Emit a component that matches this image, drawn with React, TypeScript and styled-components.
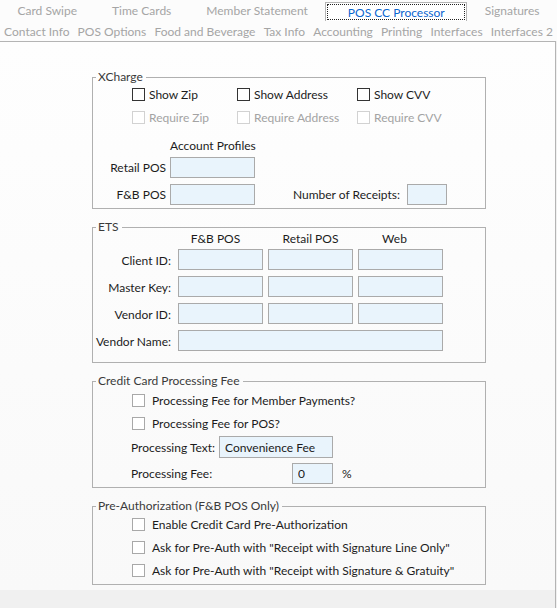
import styled, { createGlobalStyle } from "styled-components";

const GlobalStyle = createGlobalStyle`
  body {
    margin: 0;
    background: #f0f0f0;
    font-family: Lato, "Noto Sans", sans-serif;
    font-size: 12px;
    color: #1c1c1c;
  }
`;

const topTabs = ["Card Swipe", "Time Cards", "Member Statement", "POS CC Processor", "Signatures"];
const bottomTabs = [
  "Contact Info",
  "POS Options",
  "Food and Beverage",
  "Tax Info",
  "Accounting",
  "Printing",
  "Interfaces",
  "Interfaces 2",
];
const etsRows = ["Client ID:", "Master Key:", "Vendor ID:"];

function CheckItem({
  label,
  tone = "dark",
  disabled = false,
  gap = 4,
  width,
}: {
  label: string;
  tone?: "dark" | "light" | "faint";
  disabled?: boolean;
  gap?: number;
  width?: number;
}) {
  return (
    <CheckWrap $gap={gap} $width={width}>
      <Box $tone={tone} />
      <CheckText $disabled={disabled}>{label}</CheckText>
    </CheckWrap>
  );
}

function App() {
  return (
    <Page>
      <GlobalStyle />
      <TabStrip>
        <TabRow $height={21}>
          {topTabs.map((t) =>
            t === "POS CC Processor" ? (
              <ActiveTab key={t}>
                <Focus>{t}</Focus>
              </ActiveTab>
            ) : (
              <Tab key={t}>{t}</Tab>
            )
          )}
        </TabRow>
        <TabRow $height={20}>
          {bottomTabs.map((t) => (
            <Tab key={t} $tight>
              {t}
            </Tab>
          ))}
        </TabRow>
      </TabStrip>

      <Panel>
        <PanelContent>
          <Group>
            <Legend>XCharge</Legend>
            <GroupBody $top={-2} $bottom={3}>
              <CheckRow>
                <CheckItem label="Show Zip" width={105} />
                <CheckItem label="Show Address" width={120} />
                <CheckItem label="Show CVV" />
              </CheckRow>
              <CheckRow>
                <CheckItem label="Require Zip" tone="faint" disabled width={105} />
                <CheckItem label="Require Address" tone="faint" disabled width={120} />
                <CheckItem label="Require CVV" tone="faint" disabled />
              </CheckRow>
              <ProfilesHead>Account Profiles</ProfilesHead>
              <FieldRow $mt={3}>
                <FieldLabel $width={77}>Retail POS</FieldLabel>
                <Input $width={85} />
              </FieldRow>
              <FieldRow $mt={6}>
                <FieldLabel $width={77}>F&amp;B POS</FieldLabel>
                <Input $width={85} />
                <Spacer />
                <FieldLabel>Number of Receipts:</FieldLabel>
                <Input $width={40} $ml={7} />
                <Spacer $width={38} />
              </FieldRow>
            </GroupBody>
          </Group>

          <Group>
            <Legend>ETS</Legend>
            <GroupBody $top={0} $bottom={10}>
              <EtsHead>
                <ColHead $shift={-5}>F&amp;B POS</ColHead>
                <ColHead>Retail POS</ColHead>
                <ColHead $shift={-6}>Web</ColHead>
              </EtsHead>
              <EtsGrid>
                {etsRows.map((r) => (
                  <EtsRow key={r}>
                    <GridLabel>{r}</GridLabel>
                    <Input />
                    <Input />
                    <Input />
                  </EtsRow>
                ))}
                <EtsRow>
                  <GridLabel>Vendor Name:</GridLabel>
                  <WideInput />
                </EtsRow>
              </EtsGrid>
            </GroupBody>
          </Group>

          <Group>
            <Legend>Credit Card Processing Fee</Legend>
            <GroupBody $top={0} $bottom={3}>
              <CheckRow>
                <CheckItem label="Processing Fee for Member Payments?" tone="light" gap={7} />
              </CheckRow>
              <CheckRow>
                <CheckItem label="Processing Fee for POS?" tone="light" gap={7} />
              </CheckRow>
              <FieldRow $mt={1} $indent={38}>
                <FieldLabel $left $width={88}>
                  Processing Text:
                </FieldLabel>
                <Input $width={114} $height={22} defaultValue="Convenience Fee" />
              </FieldRow>
              <FieldRow $mt={5} $indent={38}>
                <FieldLabel $left $width={161}>
                  Processing Fee:
                </FieldLabel>
                <Input $width={41} defaultValue="0" />
                <Unit>%</Unit>
              </FieldRow>
            </GroupBody>
          </Group>

          <Group>
            <Legend>Pre-Authorization (F&amp;B POS Only)</Legend>
            <GroupBody $top={-1} $bottom={2}>
              <CheckRow>
                <CheckItem label="Enable Credit Card Pre-Authorization" tone="light" gap={7} />
              </CheckRow>
              <CheckRow>
                <CheckItem
                  label={'Ask for Pre-Auth with "Receipt with Signature Line Only"'}
                  tone="light"
                  gap={7}
                />
              </CheckRow>
              <CheckRow>
                <CheckItem
                  label={'Ask for Pre-Auth with "Receipt with Signature & Gratuity"'}
                  tone="light"
                  gap={7}
                />
              </CheckRow>
            </GroupBody>
          </Group>
        </PanelContent>
        <PanelFooter />
      </Panel>
    </Page>
  );
}

export default App;

const Page = styled.div`
  width: 557px;
  height: 608px;
  display: flex;
  flex-direction: column;
  overflow: hidden;
`;

const TabStrip = styled.div`
  height: 41px;
  background: #fcfcfc;
  display: flex;
  flex-direction: column;
`;

const TabRow = styled.div<{ $height: number }>`
  height: ${(p) => p.$height}px;
  display: flex;
  align-items: stretch;
`;

const Tab = styled.div<{ $tight?: boolean }>`
  flex: 1 1 auto;
  display: flex;
  align-items: center;
  justify-content: center;
  padding: 0 ${(p) => (p.$tight ? 4 : 10)}px;
  color: #a5a5a5;
  white-space: nowrap;
`;

const ActiveTab = styled.div`
  flex: 1 1 auto;
  margin-top: 2px;
  padding: 1px;
  background: #ffffff;
  border: 1px solid #b4b4b4;
  border-bottom: none;
  display: flex;
  color: #0b66cf;
  white-space: nowrap;
`;

const Focus = styled.div`
  flex: 1;
  display: flex;
  align-items: center;
  justify-content: center;
  padding: 0 12px;
  border: 1px dotted #222;
`;

const Panel = styled.div`
  flex: 1;
  display: flex;
  flex-direction: column;
  border-top: 1px solid #b4b4b4;
  border-right: 1px solid #b4b4b4;
  margin-right: 1px;
`;

const PanelContent = styled.div`
  background: linear-gradient(to bottom, #fefefe, #f9f9f9);
  padding: 27px 0 5px 92px;
  display: flex;
  flex-direction: column;
  gap: 10px;
`;

const PanelFooter = styled.div`
  flex: 1;
  background: #f0f0f0;
`;

const Group = styled.fieldset`
  width: 394px;
  box-sizing: border-box;
  margin: 0;
  padding: 0;
  border: 1px solid #b0b0b0;
  min-width: 0;
`;

const Legend = styled.legend`
  margin-left: 3px;
  padding: 0 3px 0 2px;
  line-height: 16px;
  color: #3a3a3a;
`;

const GroupBody = styled.div<{ $top: number; $bottom: number }>`
  margin-top: ${(p) => p.$top}px;
  padding-bottom: ${(p) => p.$bottom}px;
  display: flex;
  flex-direction: column;
`;

const CheckRow = styled.div`
  height: 23px;
  display: flex;
  align-items: center;
  padding-left: 39px;
`;

const CheckWrap = styled.label<{ $gap: number; $width?: number }>`
  display: flex;
  align-items: center;
  gap: ${(p) => p.$gap}px;
  width: ${(p) => (p.$width ? `${p.$width}px` : "auto")};
  white-space: nowrap;
`;

const Box = styled.span<{ $tone: "dark" | "light" | "faint" }>`
  width: 11px;
  height: 11px;
  flex: none;
  background: #ffffff;
  border: 1px solid
    ${(p) => (p.$tone === "dark" ? "#333333" : p.$tone === "light" ? "#a8a8a8" : "#d2d2d2")};
`;

const CheckText = styled.span<{ $disabled: boolean }>`
  color: ${(p) => (p.$disabled ? "#a3a3a3" : "#1c1c1c")};
`;

const ProfilesHead = styled.div`
  margin-top: 9px;
  height: 16px;
  line-height: 16px;
  width: 85px;
  margin-left: 77px;
  text-align: center;
  white-space: nowrap;
`;

const FieldRow = styled.div<{ $mt: number; $indent?: number }>`
  margin-top: ${(p) => p.$mt}px;
  display: flex;
  align-items: center;
  padding-left: ${(p) => p.$indent ?? 0}px;
`;

const FieldLabel = styled.span<{ $width?: number; $left?: boolean }>`
  width: ${(p) => (p.$width ? `${p.$width}px` : "auto")};
  padding-right: ${(p) => (p.$width && !p.$left ? 4 : 0)}px;
  box-sizing: border-box;
  text-align: ${(p) => (p.$left ? "left" : "right")};
  white-space: nowrap;
`;

const Spacer = styled.span<{ $width?: number }>`
  flex: ${(p) => (p.$width ? "none" : "1")};
  width: ${(p) => (p.$width ? `${p.$width}px` : "auto")};
`;

const Input = styled.input<{ $width?: number; $height?: number; $ml?: number }>`
  width: ${(p) => (p.$width ? `${p.$width}px` : "100%")};
  height: ${(p) => p.$height ?? 21}px;
  margin: 0 0 0 ${(p) => p.$ml ?? 0}px;
  box-sizing: border-box;
  background: #e9f4fc;
  border: 1px solid #aaaaaa;
  padding: 0 5px;
  font: inherit;
  color: #1a1a1a;
  outline: none;
`;

const WideInput = styled(Input)`
  grid-column: 2 / 5;
`;

const EtsHead = styled.div`
  margin-top: -3px;
  height: 14px;
  padding-left: 85px;
  display: grid;
  grid-template-columns: 85px 85px 85px;
  column-gap: 5px;
`;

const EtsGrid = styled.div`
  margin-top: 3px;
  display: flex;
  flex-direction: column;
  gap: 5px;
`;

const EtsRow = styled.div`
  display: grid;
  grid-template-columns: 76px 85px 85px 85px;
  grid-auto-rows: 22px;
  column-gap: 5px;
  padding-left: 4px;
`;

const ColHead = styled.div<{ $shift?: number }>`
  text-align: center;
  line-height: 14px;
  white-space: nowrap;
  transform: translateX(${(p) => p.$shift ?? 0}px);
`;

const GridLabel = styled.div`
  display: flex;
  align-items: center;
  justify-content: flex-end;
  padding-right: 2px;
  white-space: nowrap;
`;

const Unit = styled.span`
  margin-left: 9px;
`;
